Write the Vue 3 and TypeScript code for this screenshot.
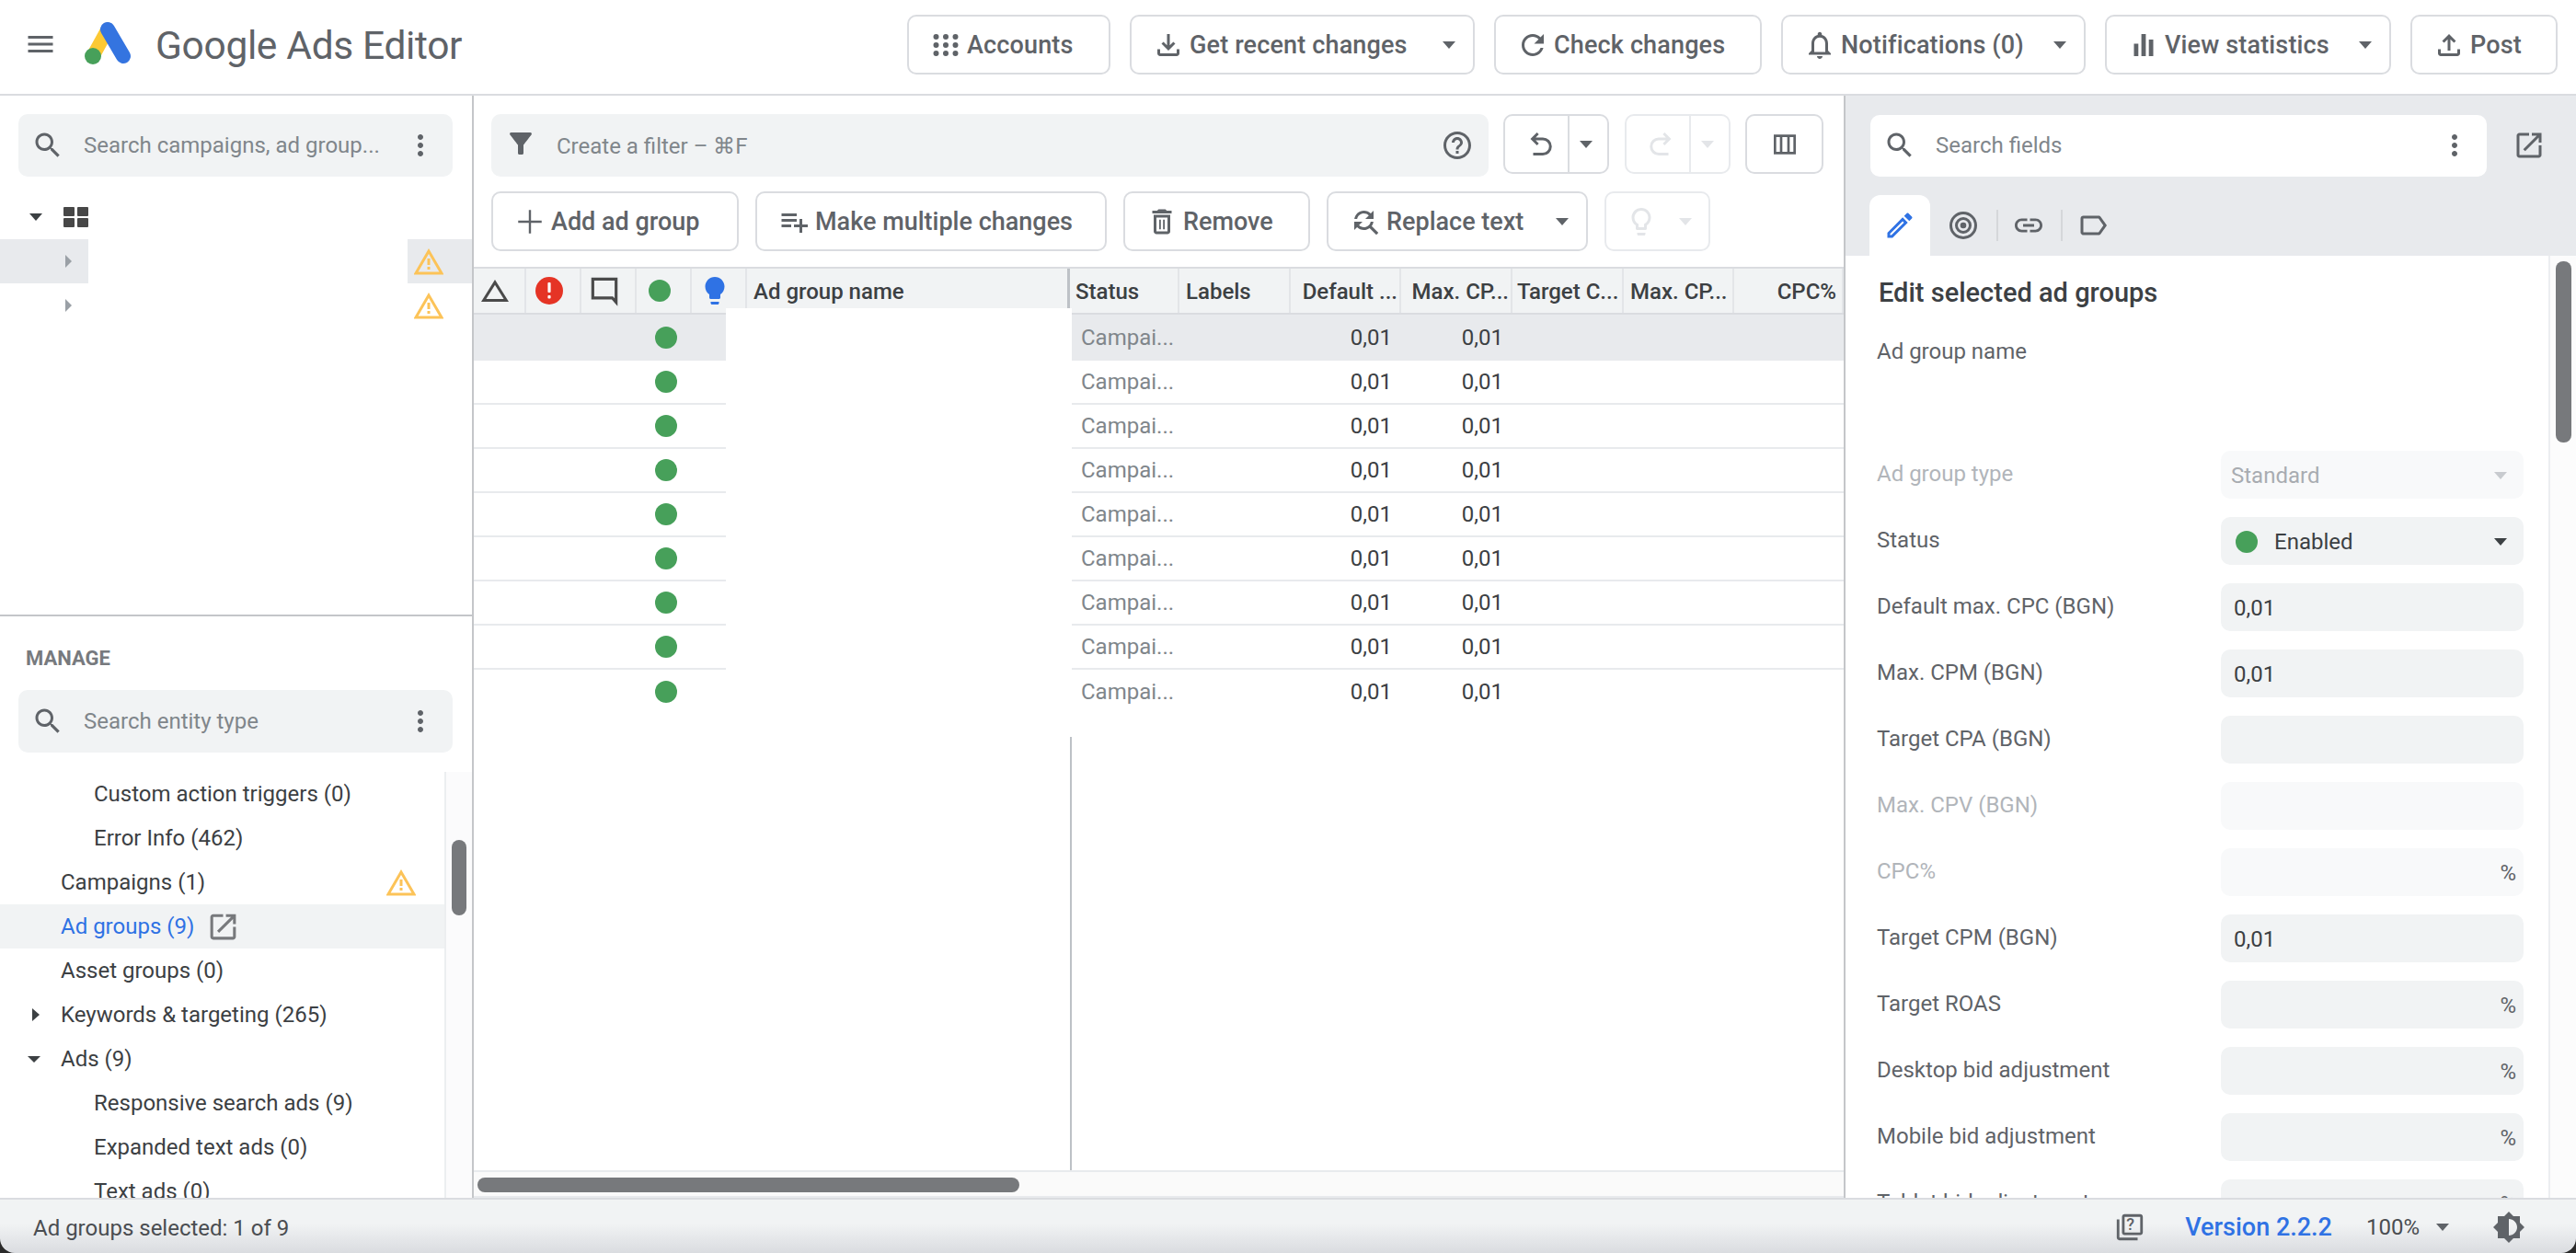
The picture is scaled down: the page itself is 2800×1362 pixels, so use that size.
<script setup lang="ts">
const p: Record<string, string> = {
  menu: 'M3 18h18v-2H3v2zm0-5h18v-2H3v2zm0-7v2h18V6H3z',
  search: 'M15.5 14h-.79l-.28-.27C15.41 12.59 16 11.11 16 9.5 16 5.91 13.09 3 9.5 3S3 5.91 3 9.5 5.91 16 9.5 16c1.61 0 3.09-.59 4.23-1.57l.27.28v.79l5 4.99L20.49 19l-4.99-5zm-6 0C7.01 14 5 11.99 5 9.5S7.01 5 9.5 5 14 7.01 14 9.5 11.99 14 9.5 14z',
  more: 'M12 8c1.1 0 2-.9 2-2s-.9-2-2-2-2 .9-2 2 .9 2 2 2zm0 2c-1.1 0-2 .9-2 2s.9 2 2 2 2-.9 2-2-.9-2-2-2zm0 6c-1.1 0-2 .9-2 2s.9 2 2 2 2-.9 2-2-.9-2-2-2z',
  apps: 'M5 4a2 2 0 1 0 0 4 2 2 0 0 0 0-4zm7 0a2 2 0 1 0 0 4 2 2 0 0 0 0-4zm7 0a2 2 0 1 0 0 4 2 2 0 0 0 0-4zM5 10a2 2 0 1 0 0 4 2 2 0 0 0 0-4zm7 0a2 2 0 1 0 0 4 2 2 0 0 0 0-4zm7 0a2 2 0 1 0 0 4 2 2 0 0 0 0-4zM5 16a2 2 0 1 0 0 4 2 2 0 0 0 0-4zm7 0a2 2 0 1 0 0 4 2 2 0 0 0 0-4zm7 0a2 2 0 1 0 0 4 2 2 0 0 0 0-4z',
  download: 'M18 15v3H6v-3H4v3c0 1.1.9 2 2 2h12c1.1 0 2-.9 2-2v-3h-2zm-1-4l-1.41-1.41L13 12.17V4h-2v8.17L8.41 9.59 7 11l5 5 5-5z',
  upload: 'M18 15v3H6v-3H4v3c0 1.1.9 2 2 2h12c1.1 0 2-.9 2-2v-3h-2zM7 9l1.41 1.41L11 7.83V16h2V7.83l2.59 2.58L17 9l-5-5-5 5z',
  refresh: 'M17.65 6.35C16.2 4.9 14.21 4 12 4c-4.42 0-7.99 3.58-7.99 8s3.57 8 7.99 8c3.73 0 6.84-2.55 7.73-6h-2.08c-.82 2.33-3.04 4-5.65 4-3.31 0-6-2.69-6-6s2.69-6 6-6c1.66 0 3.14.69 4.22 1.78L13 11h7V4l-2.35 2.35z',
  bell: 'M12 22c1.1 0 2-.9 2-2h-4c0 1.1.9 2 2 2zm6-6v-5c0-3.07-1.63-5.64-4.5-6.32V4c0-.83-.67-1.5-1.5-1.5s-1.5.67-1.5 1.5v.68C7.64 5.36 6 7.92 6 11v5l-2 2v1h16v-1l-2-2zm-2 1H8v-6c0-2.48 1.51-4.5 4-4.5s4 2.02 4 4.5v6z',
  bars: 'M5 11h3.2v9H5zM10.4 4h3.2v16h-3.2zM15.8 8H19v12h-3.2z',
  filter: 'M4.25 5.61C6.27 8.2 10 13 10 13v6c0 .55.45 1 1 1h2c.55 0 1-.45 1-1v-6s3.72-4.8 5.74-7.39c.51-.66.04-1.61-.79-1.61H5.04c-.83 0-1.3.95-.79 1.61z',
  help: 'M11 18h2v-2h-2v2zm1-16C6.48 2 2 6.48 2 12s4.48 10 10 10 10-4.48 10-10S17.52 2 12 2zm0 18c-4.41 0-8-3.59-8-8s3.59-8 8-8 8 3.59 8 8-3.59 8-8 8zm0-14c-2.21 0-4 1.79-4 4h2c0-1.1.9-2 2-2s2 .9 2 2c0 2-3 1.75-3 5h2c0-2.25 3-2.5 3-5 0-2.21-1.79-4-4-4z',
  undo: 'M9.7 3.3l1.4 1.4L8.8 7H14a6.5 6.5 0 0 1 0 13H7v-2h7a4.5 4.5 0 0 0 0-9H8.8l2.3 2.3-1.4 1.4L5 8z',
  redo: 'M14.3 3.3l-1.4 1.4L15.2 7H10a6.5 6.5 0 0 0 0 13h7v-2h-7a4.5 4.5 0 0 1 0-9h5.2l-2.3 2.3 1.4 1.4L19 8z',
  columns: 'M3 4h18v16H3V4zm2 2v12h3V6H5zm5 0v12h4V6h-4zm6 0v12h3V6h-3z',
  add: 'M20.5 12.8h-7.7v7.7h-1.6v-7.7H3.5v-1.6h7.7V3.5h1.6v7.7h7.7v1.6z',
  listadd: 'M14 10H3v2h11v-2zm0-4H3v2h11V6zm4 8v-4h-2v4h-4v2h4v4h2v-4h4v-2h-4zM3 16h7v-2H3v2z',
  trash: 'M6 19c0 1.1.9 2 2 2h8c1.1 0 2-.9 2-2V7H6v12zM8 9h8v10H8V9zm7.5-5l-1-1h-5l-1 1H5v2h14V4zM10 10.5h1.2v7H10zM12.8 10.5H14v7h-1.2z',
  replace: 'M11 6c1.38 0 2.63.56 3.54 1.46L12 10h6V4l-2.05 2.05C14.68 4.78 12.93 4 11 4c-3.53 0-6.43 2.61-6.92 6H6.1c.46-2.28 2.48-4 4.9-4zm5.64 9.14c.66-.9 1.12-1.97 1.28-3.14H15.9c-.46 2.28-2.48 4-4.9 4-1.38 0-2.63-.56-3.54-1.46L10 12H4v6l2.05-2.05C7.32 17.22 9.07 18 11 18c1.55 0 2.98-.51 4.14-1.36L20 21.49 21.49 20l-4.85-4.86z',
  bulb: 'M9 21c0 .55.45 1 1 1h4c.55 0 1-.45 1-1v-1H9v1zm3-19C8.14 2 5 5.14 5 9c0 2.38 1.19 4.47 3 5.74V17c0 .55.45 1 1 1h6c.55 0 1-.45 1-1v-2.26c1.81-1.27 3-3.36 3-5.74 0-3.86-3.14-7-7-7zm2.85 11.1l-.85.6V16h-4v-2.3l-.85-.6C7.8 12.16 7 10.63 7 9c0-2.76 2.24-5 5-5s5 2.24 5 5c0 1.63-.8 3.16-2.15 4.1z',
  bulbfill: 'M9 21c0 .55.45 1 1 1h4c.55 0 1-.45 1-1v-1H9v1zm3-19C8.14 2 5 5.14 5 9c0 2.38 1.19 4.47 3 5.74V17c0 .55.45 1 1 1h6c.55 0 1-.45 1-1v-2.26c1.81-1.27 3-3.36 3-5.74 0-3.86-3.14-7-7-7z',
  open: 'M19 19H5V5h7V3H5c-1.11 0-2 .9-2 2v14c0 1.1.89 2 2 2h14c1.1 0 2-.9 2-2v-7h-2v7zM14 3v2h3.59l-9.83 9.83 1.41 1.41L19 6.41V10h2V3h-7z',
  edit: 'M3 17.25V21h3.75L17.81 9.94l-3.75-3.75L3 17.25zM5.92 19H5v-.92l9.06-9.06.92.92L5.92 19zM20.71 7.04c.39-.39.39-1.02 0-1.41l-2.34-2.34c-.2-.2-.45-.29-.71-.29s-.51.1-.7.29l-1.83 1.83 3.75 3.75 1.83-1.83z',
  target: 'M12 2a10 10 0 1 0 0 20 10 10 0 0 0 0-20zm0 18a8 8 0 1 1 0-16 8 8 0 0 1 0 16zm0-14a6 6 0 1 0 0 12 6 6 0 0 0 0-12zm0 10a4 4 0 1 1 0-8 4 4 0 0 1 0 8zm0-6.2a2.2 2.2 0 1 0 0 4.4 2.2 2.2 0 0 0 0-4.4z',
  link: 'M3.9 12c0-1.71 1.39-3.1 3.1-3.1h4V7H7c-2.76 0-5 2.24-5 5s2.24 5 5 5h4v-1.9H7c-1.71 0-3.1-1.39-3.1-3.1zM8 13h8v-2H8v2zm9-6h-4v1.9h4c1.71 0 3.1 1.39 3.1 3.1s-1.39 3.1-3.1 3.1h-4V17h4c2.76 0 5-2.24 5-5s-2.24-5-5-5z',
  label: 'M17.63 5.84C17.27 5.33 16.67 5 16 5L5 5.01C3.9 5.01 3 5.9 3 7v10c0 1.1.9 1.99 2 1.99L16 19c.67 0 1.27-.33 1.63-.84L22 12l-4.37-6.16zM16 17H5V7h11l3.55 5L16 17z',
  comment: 'M3 3h18v19.5L17 18H3V3zm2 2v11h12.8l1.2 1.2V5H5z',
  delta: 'M12 4L22 20H2L12 4zm0 3.8L5.6 18h12.8L12 7.8z',
  quiz: 'M4 6H2v14c0 1.1.9 2 2 2h14v-2H4V6zm16-4H8c-1.1 0-2 .9-2 2v12c0 1.1.9 2 2 2h12c1.1 0 2-.9 2-2V4c0-1.1-.9-2-2-2zm0 14H8V4h12v12z',
  tonality: 'M20 15.31L23.31 12 20 8.69V4h-4.69L12 .69 8.69 4H4v4.69L.69 12 4 15.31V20h4.69L12 23.31 15.31 20H20v-4.69zM12 18V6c3.31 0 6 2.69 6 6s-2.69 6-6 6z',
}

const topButtons = [
  { icon: 'apps', text: 'Accounts', width: 221, caret: false },
  { icon: 'download', text: 'Get recent changes', width: 375, caret: true },
  { icon: 'refresh', text: 'Check changes', width: 291, caret: false },
  { icon: 'bell', text: 'Notifications (0)', width: 331, caret: true },
  { icon: 'bars', text: 'View statistics', width: 311, caret: true },
  { icon: 'upload', text: 'Post', width: 160, caret: false },
]
const actionButtons = [
  { icon: 'add', text: 'Add ad group', width: 269, caret: false },
  { icon: 'listadd', text: 'Make multiple changes', width: 382, caret: false },
  { icon: 'trash', text: 'Remove', width: 203, caret: false },
  { icon: 'replace', text: 'Replace text', width: 284, caret: true },
]
const manageItems = [
  { text: 'Custom action triggers (0)', level: 2 },
  { text: 'Error Info (462)', level: 2 },
  { text: 'Campaigns (1)', level: 1, warn: true },
  { text: 'Ad groups (9)', level: 1, active: true },
  { text: 'Asset groups (0)', level: 1 },
  { text: 'Keywords & targeting (265)', level: 1, caret: 'side' },
  { text: 'Ads (9)', level: 1, caret: 'down' },
  { text: 'Responsive search ads (9)', level: 2 },
  { text: 'Expanded text ads (0)', level: 2 },
  { text: 'Text ads (0)', level: 2 },
]
const headCols = [
  { text: 'Status', width: 119, cls: 'c-status' },
  { text: 'Labels', width: 121, cls: 'c-plain' },
  { text: 'Default ...', width: 120, cls: 'end c-tight' },
  { text: 'Max. CP...', width: 121, cls: 'end c-tight' },
  { text: 'Target C...', width: 121, cls: 'c-target' },
  { text: 'Max. CP...', width: 120, cls: 'c-plain' },
  { text: 'CPC%', width: 119, cls: 'end' },
]
const rows = Array.from({ length: 9 }, (_, i) => i)
const fields = [
  { label: 'Ad group type', value: 'Standard', disabled: true, select: true },
  { label: 'Status', value: 'Enabled', select: true, dot: true },
  { label: 'Default max. CPC (BGN)', value: '0,01' },
  { label: 'Max. CPM (BGN)', value: '0,01' },
  { label: 'Target CPA (BGN)', value: '' },
  { label: 'Max. CPV (BGN)', value: '', disabled: true },
  { label: 'CPC%', value: '', disabled: true, pct: true },
  { label: 'Target CPM (BGN)', value: '0,01' },
  { label: 'Target ROAS', value: '', pct: true },
  { label: 'Desktop bid adjustment', value: '', pct: true },
  { label: 'Mobile bid adjustment', value: '', pct: true },
  { label: 'Tablet bid adjustment', value: '', pct: true },
]
</script>

<template>
  <div class="app">
    <header class="topbar">
      <svg class="ic menu" viewBox="0 0 24 24"><path :d="p.menu" /></svg>
      <svg class="logo" viewBox="0 0 52 47">
        <line x1="25" y1="9" x2="9" y2="38" stroke="#fcc934" stroke-width="15" stroke-linecap="round" />
        <line x1="25" y1="9" x2="42" y2="38" stroke="#3474e0" stroke-width="16" stroke-linecap="round" />
        <circle cx="9" cy="38" r="9" fill="#47a05a" />
      </svg>
      <div class="brand">Google Ads Editor</div>
      <div class="top-actions">
        <button v-for="b in topButtons" :key="b.text" class="btn" :style="{ width: b.width + 'px' }">
          <svg class="ic" viewBox="0 0 24 24"><path :d="p[b.icon]" /></svg>
          <span>{{ b.text }}</span>
          <i v-if="b.caret" class="caret end"></i>
        </button>
      </div>
    </header>

    <main class="main">
      <aside class="left">
        <section class="accounts">
          <div class="search grey">
            <svg class="ic" viewBox="0 0 24 24"><path :d="p.search" /></svg>
            <span class="ph">Search campaigns, ad group...</span>
            <svg class="ic more" viewBox="0 0 24 24"><path :d="p.more" /></svg>
          </div>
          <div class="root">
            <i class="caret dark"></i>
            <div class="grid-ic"><b></b><b></b><b></b><b></b></div>
          </div>
          <div class="acc-row selected">
            <div class="acc-a"><i class="tri"></i></div>
            <div class="acc-gap"></div>
            <div class="acc-b">
              <svg class="warn" viewBox="0 0 32 29"><path d="M16 3l14 24H2z" fill="none" stroke="#fcc358" stroke-width="3" /><path d="M14.5 11h3v7h-3zM14.5 20h3v3h-3z" fill="#fcc358" /></svg>
            </div>
          </div>
          <div class="acc-row">
            <div class="acc-a"><i class="tri"></i></div>
            <div class="acc-gap"></div>
            <div class="acc-b">
              <svg class="warn" viewBox="0 0 32 29"><path d="M16 3l14 24H2z" fill="none" stroke="#fcc358" stroke-width="3" /><path d="M14.5 11h3v7h-3zM14.5 20h3v3h-3z" fill="#fcc358" /></svg>
            </div>
          </div>
        </section>

        <section class="manage">
          <div class="manage-title">MANAGE</div>
          <div class="search grey">
            <svg class="ic" viewBox="0 0 24 24"><path :d="p.search" /></svg>
            <span class="ph">Search entity type</span>
            <svg class="ic more" viewBox="0 0 24 24"><path :d="p.more" /></svg>
          </div>
          <div class="tree-wrap">
            <ul class="tree">
              <li
                v-for="m in manageItems"
                :key="m.text"
                :class="['tree-row', 'lvl' + m.level, { active: m.active }]"
              >
                <i v-if="m.caret === 'side'" class="tree-caret side"></i>
                <i v-if="m.caret === 'down'" class="tree-caret down"></i>
                <span>{{ m.text }}</span>
                <svg v-if="m.active" class="ic open-small" viewBox="0 0 24 24"><path :d="p.open" /></svg>
                <svg v-if="m.warn" class="warn tree-warn" viewBox="0 0 32 29"><path d="M16 3l14 24H2z" fill="none" stroke="#fcc358" stroke-width="3" /><path d="M14.5 11h3v7h-3zM14.5 20h3v3h-3z" fill="#fcc358" /></svg>
              </li>
            </ul>
            <div class="vtrack"><div class="vthumb tree-thumb"></div></div>
          </div>
        </section>
      </aside>

      <section class="center">
        <div class="tools">
          <div class="filter grey">
            <svg class="ic filter-ic" viewBox="0 0 24 24"><path :d="p.filter" /></svg>
            <span class="ph filter-ph">Create a filter – ⌘F</span>
            <svg class="ic help-ic" viewBox="0 0 24 24"><path :d="p.help" /></svg>
          </div>
          <div class="split">
            <span class="split-a"><svg class="ic" viewBox="0 0 24 24"><path :d="p.undo" /></svg></span>
            <span class="split-b"><i class="caret"></i></span>
          </div>
          <div class="split off">
            <span class="split-a"><svg class="ic" viewBox="0 0 24 24"><path :d="p.redo" /></svg></span>
            <span class="split-b"><i class="caret"></i></span>
          </div>
          <div class="square"><svg class="ic" viewBox="0 0 24 24"><path :d="p.columns" /></svg></div>
        </div>
        <div class="tools second">
          <button v-for="b in actionButtons" :key="b.text" class="btn" :style="{ width: b.width + 'px' }">
            <svg class="ic" viewBox="0 0 24 24"><path :d="p[b.icon]" /></svg>
            <span>{{ b.text }}</span>
            <i v-if="b.caret" class="caret end"></i>
          </button>
          <div class="bulb-btn">
            <svg class="ic" viewBox="0 0 24 24"><path :d="p.bulb" /></svg>
            <i class="caret"></i>
          </div>
        </div>

        <div class="table">
          <div class="thead">
            <div class="ith first"><svg class="ic dark" viewBox="0 0 24 24"><path :d="p.delta" /></svg></div>
            <div class="ith">
              <svg class="alert" viewBox="0 0 30 30"><circle cx="15" cy="15" r="15" fill="#e53425" /><rect x="13.4" y="6" width="3.2" height="11" rx="1" fill="#fff" /><rect x="13.4" y="20" width="3.2" height="3.4" rx="1" fill="#fff" /></svg>
            </div>
            <div class="ith"><svg class="ic dark big" viewBox="0 0 24 24"><path :d="p.comment" /></svg></div>
            <div class="ith"><i class="dot"></i></div>
            <div class="ith"><svg class="ic blue" viewBox="0 0 24 24"><path :d="p.bulbfill" /></svg></div>
            <div class="th name">Ad group name</div>
            <div
              v-for="(c, i) in headCols"
              :key="i"
              :class="['th', c.cls]"
              :style="{ width: c.width + 'px' }"
            >{{ c.text }}</div>
            <div class="name-mask"></div>
          </div>
          <div class="tbody">
            <div v-for="r in rows" :key="r" :class="['row', { sel: r === 0, last: r === 8 }]">
              <div class="seg seg-l"><i class="dot"></i></div>
              <div class="seg-gap"></div>
              <div class="seg seg-r">
                <span class="cell state">Campai...</span>
                <span class="cell num c1">0,01</span>
                <span class="cell num c2">0,01</span>
              </div>
            </div>
            <div class="col-rest"></div>
          </div>
          <div class="htrack"><div class="hthumb"></div></div>
        </div>
      </section>

      <aside class="inspector">
        <div class="inspector-head">
          <div class="search white">
            <svg class="ic" viewBox="0 0 24 24"><path :d="p.search" /></svg>
            <span class="ph">Search fields</span>
            <svg class="ic more" viewBox="0 0 24 24"><path :d="p.more" /></svg>
          </div>
          <svg class="ic pop" viewBox="0 0 24 24"><path :d="p.open" /></svg>
        </div>
        <div class="tabs">
          <div class="tab active"><svg class="ic blue" viewBox="0 0 24 24"><path :d="p.edit" /></svg></div>
          <div class="tab wide"><svg class="ic" viewBox="0 0 24 24"><path :d="p.target" /></svg></div>
          <i class="tab-sep"></i>
          <div class="tab"><svg class="ic" viewBox="0 0 24 24"><path :d="p.link" /></svg></div>
          <i class="tab-sep"></i>
          <div class="tab"><svg class="ic" viewBox="0 0 24 24"><path :d="p.label" /></svg></div>
        </div>
        <div class="form-wrap">
          <div class="form">
            <h2 class="form-title">Edit selected ad groups</h2>
            <div class="name-field">Ad group name</div>
            <div v-for="f in fields" :key="f.label" :class="['field', { off: f.disabled }]">
              <label>{{ f.label }}</label>
              <div class="control">
                <i v-if="f.dot" class="dot ctl-dot"></i>
                <span>{{ f.value }}</span>
                <em v-if="f.pct">%</em>
                <i v-if="f.select" class="caret ctl-caret" :class="{ dark: !f.disabled }"></i>
              </div>
            </div>
          </div>
          <div class="vtrack form-track"><div class="vthumb form-thumb"></div></div>
        </div>
      </aside>
    </main>

    <footer class="statusbar">
      <span class="selected-count">Ad groups selected: 1 of 9</span>
      <div class="statusbar-end">
        <span class="quiz">
          <svg class="ic" viewBox="0 0 24 24"><path :d="p.quiz" /></svg>
          <b>?</b>
        </span>
        <a class="version">Version 2.2.2</a>
        <span class="zoom-level">100%</span>
        <i class="caret"></i>
        <svg class="ic tone" viewBox="0 0 24 24"><path :d="p.tonality" /></svg>
      </div>
    </footer>
  </div>
</template>

<style scoped>
.app { width: 2800px; height: 1362px; display: flex; flex-direction: column; overflow: hidden; background: #2a2a2a; font-family: Roboto, "Open Sans", sans-serif; color: #3c4043; font-size: 24px; }
* { box-sizing: border-box; }
button { font: inherit; }
ul { list-style: none; margin: 0; padding: 0; }
.ic { width: 36px; height: 36px; fill: #5f6368; flex: none; display: block; }
.ic.blue { fill: #2f72e4; }
.ic.dark { fill: #4a4a4a; }

.topbar { height: 104px; flex: none; display: flex; background: #fff; border-bottom: 2px solid #dadce0; padding: 16px 20px 0 0; }
.menu { margin: 14px 0 0 26px; }
.logo { width: 52px; height: 47px; margin: 7px 0 0 30px; flex: none; }
.brand { margin: 7px 0 0 25px; font-size: 42.5px; color: #5f6368; letter-spacing: -.35px; line-height: 54px; }
.top-actions { margin-left: auto; display: flex; gap: 21px; }

.btn { height: 65px; border: 2px solid #dadce0; border-radius: 10px; background: #fff; display: flex; align-items: center; padding: 0 0 0 22px; gap: 5px; color: #5f6368; font-size: 27px; letter-spacing: .15px; font-weight: 500; flex: none; }
.caret { display: block; width: 0; height: 0; border-left: 7px solid transparent; border-right: 7px solid transparent; border-top: 8px solid #5f6368; flex: none; }
.caret.end { margin-left: auto; margin-right: 19px; }
.caret.dark { border-top-color: #3c4043; }

.main { flex: 1; min-height: 0; display: flex; background: #fff; }

.left { width: 515px; flex: none; border-right: 2px solid #c4c6c9; display: flex; flex-direction: column; }
.accounts { height: 566px; flex: none; border-bottom: 2px solid #c4c6c9; padding-top: 20px; }
.search { display: flex; align-items: center; height: 68px; border-radius: 10px; margin: 0 21px 0 20px; padding: 0 17px 0 14px; gap: 21px; }
.grey { background: #f1f3f4; }
.white { background: #fff; }
.ph { color: #80868b; font-size: 24px; flex: 1; white-space: nowrap; }
.more { margin-left: auto; }
.root { height: 68px; display: flex; align-items: center; padding: 20px 0 0 32px; gap: 23px; }
.grid-ic { width: 27px; height: 22px; display: grid; grid-template-columns: 1fr 1fr; gap: 2px 3px; }
.grid-ic b { background: #474747; border-radius: 1px; }
.acc-row { height: 48px; display: flex; }
.acc-a { width: 96px; display: flex; align-items: center; padding-left: 71px; }
.acc-gap { flex: 1; }
.acc-b { width: 70px; display: flex; align-items: center; padding-left: 7px; }
.selected .acc-a, .selected .acc-b { background: #e8eaed; }
.tri { width: 0; height: 0; border-top: 7px solid transparent; border-bottom: 7px solid transparent; border-left: 7px solid #9aa0a6; display: block; }
.warn { width: 32px; height: 29px; display: block; }

.manage { flex: 1; min-height: 0; display: flex; flex-direction: column; overflow: hidden; }
.manage-title { font-size: 22px; font-weight: 700; color: #777a7e; margin: 33px 0 21px 28px; line-height: 26px; }
.tree-wrap { flex: 1; min-height: 0; display: flex; margin-top: 21px; overflow: hidden; }
.tree { flex: 1; min-width: 0; }
.tree-row { height: 48px; display: flex; align-items: center; position: relative; font-size: 24px; white-space: nowrap; }
.lvl1 { padding-left: 66px; }
.lvl2 { padding-left: 102px; }
.tree-row.active { background: #f1f3f4; color: #2f72e4; }
.open-small { margin-left: 13px; fill: #77797c; width: 37px; height: 37px; }
.tree-warn { margin-left: auto; margin-right: 31px; }
.tree-caret { position: absolute; width: 0; height: 0; display: block; }
.tree-caret.side { left: 35px; border-top: 7px solid transparent; border-bottom: 7px solid transparent; border-left: 8px solid #3c4043; }
.tree-caret.down { left: 30px; border-left: 7px solid transparent; border-right: 7px solid transparent; border-top: 7px solid #3c4043; }
.vtrack { width: 30px; flex: none; background: #fbfbfc; border-left: 2px solid #eceef0; display: flex; justify-content: center; }
.vthumb { width: 16px; background: #77797c; border-radius: 8px; }
.tree-thumb { height: 82px; margin-top: 74px; }

.center { width: 1489px; flex: none; display: flex; flex-direction: column; }
.tools { display: flex; padding: 20px 0 0 19px; height: 88px; flex: none; gap: 16px; }
.filter { width: 1084px; height: 68px; border-radius: 10px; display: flex; align-items: center; padding-left: 14px; }
.filter-ic { margin-top: -4px; }
.filter-ph { margin-left: 21px; padding-top: 2px; }
.help-ic { margin: 0 16px 0 auto; }
.split { width: 115px; height: 65px; border: 2px solid #dadce0; border-radius: 10px; display: flex; }
.split-a { width: 70px; border-right: 2px solid #dadce0; display: flex; align-items: center; justify-content: center; padding-left: 8px; }
.split-b { flex: 1; display: flex; align-items: center; justify-content: center; padding-right: 6px; }
.split.off { border-color: #e8eaed; margin-left: 1px; }
.split.off .split-a { border-color: #e8eaed; }
.split.off .ic { fill: #e3e5e8; }
.split.off .caret { border-top-color: #e3e5e8; }
.square { width: 85px; height: 65px; border: 2px solid #dadce0; border-radius: 10px; display: flex; align-items: center; justify-content: center; }
.square .ic { width: 32px; height: 32px; }
.tools.second { height: 82px; padding-top: 0; margin-top: 16px; gap: 18px; }
.tools.second .btn { letter-spacing: 0; }
.bulb-btn { width: 115px; height: 65px; border: 2px solid #e8eaed; border-radius: 10px; display: flex; align-items: center; padding-left: 20px; gap: 23px; }
.bulb-btn .ic { fill: #e3e5e8; }
.bulb-btn .caret { border-top-color: #e3e5e8; }

.table { flex: 1; min-height: 0; display: flex; flex-direction: column; overflow: hidden; }
.thead { height: 52px; flex: none; display: flex; position: relative; background: #f1f3f4; border-top: 2px solid #dadce0; border-bottom: 2px solid #dadce0; }
.ith { width: 60px; flex: none; border-right: 2px solid #e3e5e8; display: flex; align-items: center; justify-content: center; padding-right: 8px; }
.ith.first { width: 57px; padding-right: 10px; }
.ic.big { width: 38px; height: 38px; }
.alert { width: 30px; height: 30px; }
.dot { display: block; width: 24px; height: 24px; border-radius: 50%; background: #47a05a; }
.th { flex: none; height: 100%; display: flex; align-items: center; padding: 2px 6px 0 8px; font-weight: 500; font-size: 24px; color: #3c4043; border-right: 2px solid #e3e5e8; white-space: nowrap; overflow: hidden; }
.th.name { width: 351px; border-right: 3px solid #bdc1c6; padding-left: 7px; }
.th.end { justify-content: flex-end; }
.th.c-tight { padding-right: 2px; }
.th.c-status { padding-left: 6px; }
.th.c-target { padding-left: 5px; }
.th.c-plain { padding-left: 7px; }
.name-mask { position: absolute; left: 274px; width: 376px; top: 43px; height: 7px; background: #fff; }
.tbody { flex: 1; min-height: 0; display: flex; flex-direction: column; }
.row { height: 48px; flex: none; display: flex; }
.row.sel { height: 50px; }
.seg { border-bottom: 2px solid #e8eaed; display: flex; align-items: center; }
.row.sel .seg { background: #e8eaed; border-bottom: 0; }
.row.last .seg { border-bottom: 0; }
.seg-l { width: 274px; padding-left: 197px; }
.seg-gap { width: 376px; flex: none; }
.seg-r { flex: 1; }
.cell { font-size: 24px; color: #3c4043; }
.state { width: 118px; padding-left: 10px; color: #80868b; }
.num { text-align: right; }
.c1 { width: 230px; }
.c2 { width: 121px; }
.col-rest { flex: 1; margin: 25px 0 0 648px; border-left: 2px solid #bdc1c6; }
.htrack { height: 30px; flex: none; background: #fafafa; border-top: 2px solid #e8eaed; border-bottom: 2px solid #e8eaed; padding: 6px 0 0 4px; }
.hthumb { width: 589px; height: 16px; background: #77797c; border-radius: 8px; }

.inspector { flex: 1; min-width: 0; background: #e8eaed; border-left: 2px solid #c4c6c9; display: flex; flex-direction: column; }
.inspector-head { display: flex; align-items: center; height: 88px; flex: none; padding-top: 20px; }
.inspector-head .search { width: 670px; margin: 0 0 0 27px; height: 67px; }
.pop { margin-left: 28px; }
.tabs { height: 86px; flex: none; padding: 20px 0 0 26px; display: flex; }
.tab { width: 66px; height: 66px; display: flex; align-items: center; justify-content: center; }
.tab.active { background: #fff; border-radius: 12px 12px 0 0; }
.tab.wide { width: 72px; }
.tab-sep { width: 2px; height: 34px; background: #d5d7da; margin-top: 16px; }
.tab + .tab-sep + .tab + .tab-sep { margin-left: 2px; }
.form-wrap { flex: 1; min-height: 0; display: flex; background: #fff; overflow: hidden; }
.form { flex: 1; min-width: 0; padding: 20px 0 0 34px; }
.form-title { margin: 0 0 24px 2px; font-size: 29px; font-weight: 500; line-height: 40px; color: #3c4043; }
.name-field { height: 128px; line-height: 40px; font-size: 24px; color: #5f6368; }
.field { height: 52px; margin-bottom: 20px; display: flex; align-items: center; color: #5f6368; }
.field label { width: 374px; flex: none; padding-bottom: 3px; }
.field.off label { color: #b1b5ba; }
.control { width: 329px; height: 100%; border-radius: 10px; background: #f1f3f4; display: flex; align-items: center; padding: 2px 8px 0 14px; color: #3c4043; }
.field.off .control { background: #f8f9fa; color: #a8acb1; padding-left: 11px; }
.control em { margin-left: auto; font-style: normal; color: #5f6368; }
.ctl-dot { margin: 0 18px 0 2px; }
.ctl-caret { margin-left: auto; margin-right: 10px; }
.field.off .ctl-caret { border-top-color: #c8cbcf; }
.form-track { background: #fcfcfc; }
.form-thumb { height: 197px; margin-top: 6px; width: 17px; }

.statusbar { height: 60px; flex: none; display: flex; align-items: center; border-top: 2px solid #dadce0; background: linear-gradient(#f1f3f4 0%, #f1f3f4 45%, #dadce0 100%); border-radius: 0 0 16px 16px; padding: 4px 55px 0 36px; font-size: 24px; color: #4a4d51; }
.statusbar-end { margin-left: auto; display: flex; align-items: center; margin-top: -2px; }
.quiz { position: relative; display: block; width: 34px; height: 34px; }
.quiz .ic { width: 34px; height: 34px; }
.quiz b { position: absolute; left: 13px; top: 4px; font-size: 18px; font-weight: 500; color: #5f6368; line-height: 20px; }
.version { margin-left: 43px; color: #2f72e4; font-size: 27px; font-weight: 500; }
.zoom-level { margin-left: 37px; }
.statusbar-end .caret { margin-left: 18px; }
.tone { margin-left: 47px; }
</style>

<style>
html, body { margin: 0; padding: 0; background: #fff; }
</style>
